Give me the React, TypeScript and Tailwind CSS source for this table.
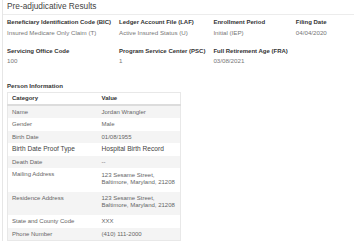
const SUMMARY = [
  { label: "Beneficiary Identification Code (BIC)", value: "Insured Medicare Only Claim (T)" },
  { label: "Ledger Account File (LAF)", value: "Active Insured Status (U)" },
  { label: "Enrollment Period", value: "Initial (IEP)" },
  { label: "Filing Date", value: "04/04/2020" },
  { label: "Servicing Office Code", value: "100" },
  { label: "Program Service Center (PSC)", value: "1" },
  { label: "Full Retirement Age (FRA)", value: "03/08/2021" }
];

const PERSON: { category: string; value: string[]; emphasis?: boolean }[] = [
  { category: "Name", value: ["Jordan Wrangler"] },
  { category: "Gender", value: ["Male"] },
  { category: "Birth Date", value: ["01/08/1955"] },
  { category: "Birth Date Proof Type", value: ["Hospital Birth Record"], emphasis: true },
  { category: "Death Date", value: ["--"] },
  { category: "Mailing Address", value: ["123 Sesame Street,", "Baltimore, Maryland, 21208"] },
  { category: "Residence Address", value: ["123 Sesame Street,", "Baltimore, Maryland, 21208"] },
  { category: "State and County Code", value: ["XXX"] },
  { category: "Phone Number", value: ["(410) 111-2000"] }
];

export default function App() {
  return (
    <div
      className="h-[241px] w-[354px] overflow-hidden bg-white"
      style={{ fontFamily: '"Liberation Sans", Arial, sans-serif' }}
    >
      <div className="ml-[2px] flex h-full flex-col border-l border-[#e6e6e6]">
        <div className="h-[16px] border-b border-[#ececec] pl-[4px] pt-[1px]">
          <h1 className="text-[8.3px] leading-[10px] text-[#444]">Pre-adjudicative Results</h1>
        </div>

        <div className="mt-[4.5px] grid grid-cols-[auto_auto_auto_auto] justify-start gap-x-[8px] gap-y-[11px] pl-[4px]">
          {SUMMARY.map((item) => (
            <div key={item.label} className="flex flex-col">
              <span className="text-[6px] font-bold leading-[7px] text-[#333]">{item.label}</span>
              <span className="mt-[2.5px] text-[6.2px] leading-[8px] text-[#777]">{item.value}</span>
            </div>
          ))}
        </div>

        <div className="mt-[17px] pl-[4px]">
          <div className="text-[6.1px] font-bold leading-[7px] text-[#333]">Person Information</div>
          <table className="mt-[2.5px] w-[174px] border-collapse border border-[#e8e8e8] text-[6px]">
            <thead>
              <tr className="border-b-2 border-[#dcdcdc]">
                <th className="w-[90px] px-[4px] py-[2px] text-left font-bold leading-[7px] text-[#333]">Category</th>
                <th className="px-[4px] py-[2px] text-left font-bold leading-[7px] text-[#333]">Value</th>
              </tr>
            </thead>
            <tbody>
              {PERSON.map((row, i) => (
                <tr
                  key={row.category}
                  className={`${i % 2 === 0 ? "bg-[#f4f4f4]" : "bg-white"} ${row.emphasis ? "text-[6.6px] text-[#444]" : "text-[#666]"}`}
                >
                  <td className="px-[4px] py-[3px] align-top leading-[6.5px]">{row.category}</td>
                  <td className={`px-[4px] align-top ${row.value.length > 1 ? "pb-[6px] pt-[3.5px] leading-[7px]" : "py-[3px] leading-[6.5px]"}`}>
                    {row.value.map((line) => (
                      <div key={line}>{line}</div>
                    ))}
                  </td>
                </tr>
              ))}
            </tbody>
          </table>
        </div>
      </div>
    </div>
  );
}
